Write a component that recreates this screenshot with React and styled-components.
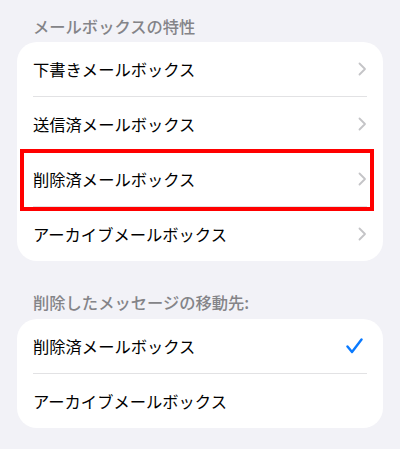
import styled, { createGlobalStyle } from 'styled-components';

const GlobalStyle = createGlobalStyle`
  html, body {
    margin: 0;
    padding: 0;
    background: #f2f2f7;
  }
  body {
    font-family: 'Noto Sans CJK JP', 'Noto Sans', sans-serif;
    -webkit-font-smoothing: antialiased;
  }
`;

const Page = styled.div`
  width: 400px;
  height: 449px;
  box-sizing: border-box;
  padding: 16px 17px 0;
  background: #f2f2f7;
  overflow: hidden;
`;

const SectionHeader = styled.div`
  padding: 0 0 0 16px;
  margin: ${({ $first }) => ($first ? '0 0 6px' : '31px 0 7px')};
  font-size: 16.3px;
  line-height: 20px;
  font-weight: 500;
  color: #848488;
`;

const Card = styled.div`
  background: #fff;
  border-radius: 20px;
`;

const Row = styled.div`
  position: relative;
  display: flex;
  align-items: center;
  justify-content: space-between;
  height: 54px;
  margin: 0 16px;
  border-bottom: ${({ $last }) => ($last ? 'none' : '1px solid #e2e2e4')};
`;

const Label = styled.span`
  font-size: 16.3px;
  color: #000;
`;

const Accessory = styled.span`
  display: flex;
  align-items: center;
  margin-right: ${({ $check }) => ($check ? '4px' : '0')};
`;

// red annotation frame drawn over the highlighted row
const Highlight = styled.div`
  position: absolute;
  left: -13px;
  right: -7px;
  top: -3px;
  bottom: -5px;
  border: 4px solid #ff0000;
  pointer-events: none;
`;

const Chevron = () => (
  <svg width="9" height="14" viewBox="0 0 9 14">
    <polyline
      points="1.5,1.5 7,7 1.5,12.5"
      fill="none"
      stroke="#c4c4c7"
      strokeWidth="1.8"
      strokeLinecap="round"
      strokeLinejoin="round"
    />
  </svg>
);

const Check = () => (
  <svg width="17" height="16" viewBox="0 0 17 16">
    <polyline
      points="1.5,8.5 6,14 15.5,1.5"
      fill="none"
      stroke="#0a7aff"
      strokeWidth="2.4"
      strokeLinecap="round"
      strokeLinejoin="round"
    />
  </svg>
);

const mailboxes = [
  { label: '下書きメールボックス' },
  { label: '送信済メールボックス' },
  { label: '削除済メールボックス', marked: true },
  { label: 'アーカイブメールボックス' },
];

const destinations = [
  { label: '削除済メールボックス', checked: true },
  { label: 'アーカイブメールボックス' },
];

export default function App() {
  return (
    <>
      <GlobalStyle />
      <Page>
        <SectionHeader $first>メールボックスの特性</SectionHeader>
        <Card>
          {mailboxes.map((m, i) => (
            <Row key={m.label} $last={i === mailboxes.length - 1}>
              <Label>{m.label}</Label>
              <Accessory>
                <Chevron />
              </Accessory>
              {m.marked && <Highlight />}
            </Row>
          ))}
        </Card>

        <SectionHeader>削除したメッセージの移動先:</SectionHeader>
        <Card>
          {destinations.map((d, i) => (
            <Row key={d.label} $last={i === destinations.length - 1}>
              <Label>{d.label}</Label>
              {d.checked && (
                <Accessory $check>
                  <Check />
                </Accessory>
              )}
            </Row>
          ))}
        </Card>
      </Page>
    </>
  );
}
